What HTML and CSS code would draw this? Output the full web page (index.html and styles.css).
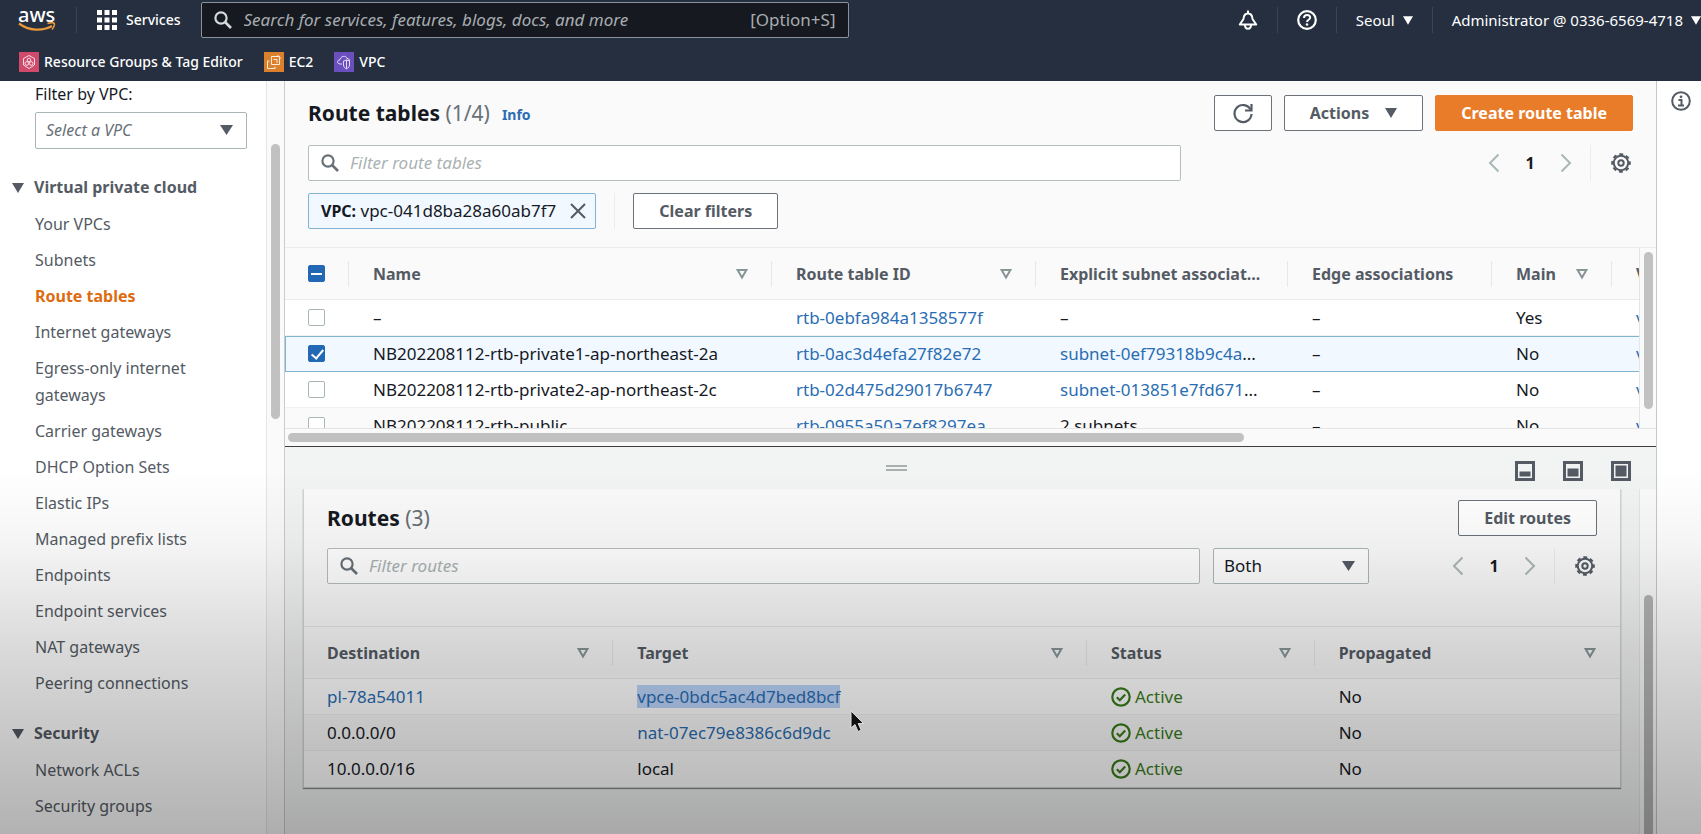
FILE: index.html
```html
<!DOCTYPE html>
<html lang="en">
<head>
    <meta charset="UTF-8">
    <meta name="viewport" content="width=device-width, initial-scale=1.0">
    <title>Route tables | VPC Management Console</title>
    <link rel="stylesheet" href="styles.css">
</head>
<body>
    <!-- shared icons -->
    <svg class="defs" width="0" height="0">
        <symbol id="i-search" viewBox="0 0 18 18"><circle cx="7" cy="7" r="5.6" fill="none" stroke="currentColor" stroke-width="2.2"/><path d="M11 11l6 6" stroke="currentColor" stroke-width="2.6"/></symbol>
        <symbol id="i-gear" viewBox="0 0 20 20"><circle cx="10" cy="10" r="7.2" fill="none" stroke="currentColor" stroke-width="2"/><circle cx="10" cy="10" r="8.8" fill="none" stroke="currentColor" stroke-width="2" stroke-dasharray="3.9 3.01" stroke-dashoffset="1.95"/><circle cx="10" cy="10" r="2.7" fill="none" stroke="currentColor" stroke-width="2"/></symbol>
        <symbol id="i-sort" viewBox="0 0 12 12"><path d="M1.6 2h8.8L6 9.6z" fill="none" stroke="currentColor" stroke-width="2"/></symbol>
        <symbol id="i-caret" viewBox="0 0 12 10"><path d="M0 0h12L6 10z" fill="currentColor"/></symbol>
        <symbol id="i-prev" viewBox="0 0 12 20"><path d="M10.5 1.5L2 10l8.5 8.5" fill="none" stroke="currentColor" stroke-width="2"/></symbol>
        <symbol id="i-next" viewBox="0 0 12 20"><path d="M1.5 1.5L10 10l-8.5 8.5" fill="none" stroke="currentColor" stroke-width="2"/></symbol>
        <symbol id="i-ok" viewBox="0 0 20 20"><circle cx="10" cy="10" r="8.7" fill="none" stroke="currentColor" stroke-width="2.2"/><path d="M5.8 10.2l3 3 5.4-5.6" fill="none" stroke="currentColor" stroke-width="2.2"/></symbol>
    </svg>

    <header class="topbar">
        <div class="topbar-row">
            <a class="logo" href="#" aria-label="aws"><span>aws</span>
                <svg width="38" height="11" viewBox="0 0 38 11"><path d="M1 1.500C11 9 24 9.500 34 4" fill="none" stroke="#e8973a" stroke-width="2.2"/><path d="M29.5 1.6c3-1 6-1 6.7-.2.7 1-.3 4-2.2 6.2" fill="none" stroke="#e8973a" stroke-width="1.6"/></svg>
            </a>
            <span class="bar"></span>
            <button class="services"><svg width="20" height="20" viewBox="0 0 20 20"><path d="M0 0h5v5H0zM7.500 0h5v5h-5zM15 0h5v5h-5zM0 7.500h5v5H0zM7.500 7.500h5v5h-5zM15 7.500h5v5h-5zM0 15h5v5H0zM7.500 15h5v5h-5zM15 15h5v5h-5z" fill="#fff"/></svg>Services</button>
            <label class="global-search">
                <svg width="18" height="18"><use href="#i-search"/></svg>
                <input type="text" aria-label="Search" placeholder="Search for services, features, blogs, docs, and more">
                <span class="shortcut">[Option+S]</span>
            </label>
            <div class="topbar-right">
                <button aria-label="Notifications"><svg width="20" height="20" viewBox="0 0 20 20"><path d="M10 .5v3M1.800 14.500L5.500 9C5.700 5.500 7.500 3.500 10 3.500s4.300 2 4.500 5.500l3.700 5.500z" fill="none" stroke="#fff" stroke-width="2" stroke-linejoin="round"/><path d="M7 15c0 5 6 5 6 0" fill="none" stroke="#fff" stroke-width="2"/></svg></button>
                <span class="bar"></span>
                <button aria-label="Help"><svg width="20" height="20" viewBox="0 0 20 20"><circle cx="10" cy="10" r="8.8" fill="none" stroke="#fff" stroke-width="2.2"/><path d="M7 8c0-4 6.200-3.800 6.200-.5C13.200 9.800 10 9.700 10 12" fill="none" stroke="#fff" stroke-width="2"/><circle cx="10" cy="14.5" r="1.3" fill="#fff"/></svg></button>
                <span class="bar"></span>
                <button>Seoul <svg width="10" height="9"><use href="#i-caret"/></svg></button>
                <span class="bar"></span>
                <button>Administrator @ 0336-6569-4718 <svg width="10" height="9"><use href="#i-caret"/></svg></button>
            </div>
        </div>
        <nav class="favorites">
            <a href="#"><svg class="pink" width="20" height="20" viewBox="0 0 20 20"><path d="M10 3.500l5.500 3v6.500L10 16.500 4.500 13V6.500z" fill="none" stroke="#fff" stroke-opacity=".8"/><circle cx="10" cy="8" r="1.8" fill="none" stroke="#fff" stroke-opacity=".8"/><circle cx="7.8" cy="11.5" r="1.8" fill="none" stroke="#fff" stroke-opacity=".8"/><circle cx="12.2" cy="11.5" r="1.8" fill="none" stroke="#fff" stroke-opacity=".8"/></svg>Resource Groups &amp; Tag Editor</a>
            <a href="#"><svg class="orange" width="20" height="20" viewBox="0 0 20 20"><path d="M7.500 4.500h8v8h-8zM5.500 9h-2v7.500h7.500v-2M14 3v1.500M17 6h-1.500M9.500 7.500h3.500v3.500" fill="none" stroke="#fff" stroke-opacity=".85"/></svg>EC2</a>
            <a href="#"><svg class="purple" width="20" height="20" viewBox="0 0 20 20"><path d="M8 12H6c-3.500-.5-3-4 0-4.200C6.500 4 12 3 13 6.500c1.500 0 2.500.8 2.500 2.500" fill="none" stroke="#fff" stroke-opacity=".8"/><path d="M9.500 9l3-1 3 1v4c0 2-1.500 3-3 3.800-1.500-.8-3-1.800-3-3.800zM12.500 8v8.500" fill="none" stroke="#fff" stroke-opacity=".8"/></svg>VPC</a>
        </nav>
    </header>

    <div class="console">
        <aside class="sidebar">
            <div class="sidebar-body">
                <label class="vpc-label" for="vpc-filter">Filter by VPC:</label>
                <div class="select vpc-select">
                    <select id="vpc-filter" class="placeholder"><option>Select a VPC</option></select>
                </div>
                <h2><svg width="12" height="10"><use href="#i-caret"/></svg>Virtual private cloud</h2>
                <ul>
                    <li><a href="#">Your VPCs</a></li>
                    <li><a href="#">Subnets</a></li>
                    <li><a class="active" href="#">Route tables</a></li>
                    <li><a href="#">Internet gateways</a></li>
                    <li><a href="#">Egress-only internet gateways</a></li>
                    <li><a href="#">Carrier gateways</a></li>
                    <li><a href="#">DHCP Option Sets</a></li>
                    <li><a href="#">Elastic IPs</a></li>
                    <li><a href="#">Managed prefix lists</a></li>
                    <li><a href="#">Endpoints</a></li>
                    <li><a href="#">Endpoint services</a></li>
                    <li><a href="#">NAT gateways</a></li>
                    <li><a href="#">Peering connections</a></li>
                </ul>
                <h2><svg width="12" height="10"><use href="#i-caret"/></svg>Security</h2>
                <ul>
                    <li><a href="#">Network ACLs</a></li>
                    <li><a href="#">Security groups</a></li>
                </ul>
            </div>
            <div class="vscroll side-scroll"><div class="thumb"></div></div>
        </aside>

        <main class="content">
            <section class="list-pane">
                <div class="list-head">
                    <div class="title-row">
                        <h1>Route tables <span class="count">(1/4)</span></h1>
                        <a class="info" href="#">Info</a>
                        <div class="actions">
                            <button class="btn icon-btn" aria-label="Refresh"><svg width="22" height="22" viewBox="0 0 22 22"><path d="M18.500 7.500A8.500 8.500 0 1 0 19.500 12" fill="none" stroke="currentColor" stroke-width="2.2"/><path d="M19.500 2v6.500H13" fill="none" stroke="currentColor" stroke-width="2.2"/></svg></button>
                            <button class="btn">Actions <svg width="12" height="10"><use href="#i-caret"/></svg></button>
                            <button class="btn primary">Create route table</button>
                        </div>
                    </div>
                    <div class="filter-row">
                        <label class="search-box">
                            <svg width="18" height="18"><use href="#i-search"/></svg>
                            <input type="text" aria-label="Filter route tables" placeholder="Filter route tables">
                        </label>
                        <div class="pager">
                            <button aria-label="Previous page"><svg width="12" height="20"><use href="#i-prev"/></svg></button>
                            <b>1</b>
                            <button aria-label="Next page"><svg width="12" height="20"><use href="#i-next"/></svg></button>
                            <span class="rule"></span>
                            <button class="gear" aria-label="Preferences"><svg width="20" height="20"><use href="#i-gear"/></svg></button>
                        </div>
                    </div>
                    <div class="chip-row">
                        <div class="chip"><span><b>VPC:</b> vpc-041d8ba28a60ab7f7</span><button aria-label="Remove filter"><svg width="16" height="16" viewBox="0 0 16 16"><path d="M1 1l14 14M15 1L1 15" stroke="currentColor" stroke-width="2"/></svg></button></div>
                        <span class="rule"></span>
                        <button class="btn">Clear filters</button>
                    </div>
                </div>
                <div class="list-body">
                    <div class="table-clip">
                        <table class="route-tables">
                            <colgroup><col class="c-check"><col class="c-name"><col class="c-id"><col class="c-subnet"><col class="c-edge"><col class="c-main"><col class="c-vpc"></colgroup>
                            <thead>
                                <tr>
                                    <th><input class="partial" type="checkbox" aria-label="Select all"></th>
                                    <th><div>Name <svg width="12" height="12"><use href="#i-sort"/></svg></div></th>
                                    <th><div>Route table ID <svg width="12" height="12"><use href="#i-sort"/></svg></div></th>
                                    <th><div>Explicit subnet associat...</div></th>
                                    <th><div>Edge associations</div></th>
                                    <th><div>Main <svg width="12" height="12"><use href="#i-sort"/></svg></div></th>
                                    <th><div>VPC</div></th>
                                </tr>
                            </thead>
                            <tbody>
                                <tr>
                                    <td><input type="checkbox" aria-label="Select rtb-0ebfa984a1358577f"></td>
                                    <td>–</td>
                                    <td><a href="#">rtb-0ebfa984a1358577f</a></td>
                                    <td>–</td>
                                    <td>–</td>
                                    <td>Yes</td>
                                    <td><a href="#">vpc-041d8ba28a60ab7f7</a></td>
                                </tr>
                                <tr class="selected">
                                    <td><input type="checkbox" checked aria-label="Select rtb-0ac3d4efa27f82e72"></td>
                                    <td>NB202208112-rtb-private1-ap-northeast-2a</td>
                                    <td><a href="#">rtb-0ac3d4efa27f82e72</a></td>
                                    <td><a href="#">subnet-0ef79318b9c4a</a>...</td>
                                    <td>–</td>
                                    <td>No</td>
                                    <td><a href="#">vpc-041d8ba28a60ab7f7</a></td>
                                </tr>
                                <tr>
                                    <td><input type="checkbox" aria-label="Select rtb-02d475d29017b6747"></td>
                                    <td>NB202208112-rtb-private2-ap-northeast-2c</td>
                                    <td><a href="#">rtb-02d475d29017b6747</a></td>
                                    <td><a href="#">subnet-013851e7fd671</a>...</td>
                                    <td>–</td>
                                    <td>No</td>
                                    <td><a href="#">vpc-041d8ba28a60ab7f7</a></td>
                                </tr>
                                <tr class="shade">
                                    <td><input type="checkbox" aria-label="Select rtb-0955a50a7ef8297ea"></td>
                                    <td>NB202208112-rtb-public</td>
                                    <td><a href="#">rtb-0955a50a7ef8297ea</a></td>
                                    <td>2 subnets</td>
                                    <td>–</td>
                                    <td>No</td>
                                    <td><a href="#">vpc-041d8ba28a60ab7f7</a></td>
                                </tr>
                            </tbody>
                        </table>
                    </div>
                    <div class="vscroll list-scroll"><div class="thumb"></div></div>
                </div>
                <div class="hscroll"><div class="thumb"></div></div>
            </section>

            <section class="split-panel">
                <div class="split-head">
                    <span class="grip"></span>
                    <div class="split-sizes">
                        <button aria-label="Small panel"><svg width="20" height="20" viewBox="0 0 20 20"><path d="M1.500 1.500h17v17h-17z" fill="#f2f3f3" stroke="currentColor" stroke-width="3"/><path d="M4.500 10.500h11v5h-11z" fill="currentColor"/></svg></button>
                        <button aria-label="Medium panel"><svg width="20" height="20" viewBox="0 0 20 20"><path d="M1.500 1.500h17v17h-17z" fill="#f2f3f3" stroke="currentColor" stroke-width="3"/><path d="M4.500 7.500h11v8h-11z" fill="currentColor"/></svg></button>
                        <button aria-label="Large panel"><svg width="20" height="20" viewBox="0 0 20 20"><path d="M1.500 1.500h17v17h-17z" fill="#f2f3f3" stroke="currentColor" stroke-width="3"/><path d="M4.500 4.500h11v11h-11z" fill="currentColor"/></svg></button>
                    </div>
                </div>
                <div class="split-body">
                    <div class="card-wrap">
                        <div class="card">
                            <div class="title-row">
                                <h1>Routes <span class="count">(3)</span></h1>
                                <div class="actions"><button class="btn">Edit routes</button></div>
                            </div>
                            <div class="filter-row">
                                <label class="search-box">
                                    <svg width="18" height="18"><use href="#i-search"/></svg>
                                    <input type="text" aria-label="Filter routes" placeholder="Filter routes">
                                </label>
                                <div class="select both-select">
                                    <select aria-label="Route type"><option>Both</option></select>
                                </div>
                                <div class="pager">
                                    <button aria-label="Previous page"><svg width="12" height="20"><use href="#i-prev"/></svg></button>
                                    <b>1</b>
                                    <button aria-label="Next page"><svg width="12" height="20"><use href="#i-next"/></svg></button>
                                    <span class="rule"></span>
                                    <button class="gear" aria-label="Preferences"><svg width="20" height="20"><use href="#i-gear"/></svg></button>
                                </div>
                            </div>
                            <table class="routes">
                                <colgroup><col class="r-dest"><col class="r-target"><col class="r-status"><col></colgroup>
                                <thead>
                                    <tr>
                                        <th><div>Destination <svg width="12" height="12"><use href="#i-sort"/></svg></div></th>
                                        <th><div>Target <svg width="12" height="12"><use href="#i-sort"/></svg></div></th>
                                        <th><div>Status <svg width="12" height="12"><use href="#i-sort"/></svg></div></th>
                                        <th><div>Propagated <svg width="12" height="12"><use href="#i-sort"/></svg></div></th>
                                    </tr>
                                </thead>
                                <tbody>
                                    <tr>
                                        <td><a href="#">pl-78a54011</a></td>
                                        <td><a class="marked" href="#">vpce-0bdc5ac4d7bed8bcf</a></td>
                                        <td><span class="ok"><svg width="20" height="20"><use href="#i-ok"/></svg>Active</span></td>
                                        <td>No</td>
                                    </tr>
                                    <tr class="shade">
                                        <td>0.0.0.0/0</td>
                                        <td><a href="#">nat-07ec79e8386c6d9dc</a></td>
                                        <td><span class="ok"><svg width="20" height="20"><use href="#i-ok"/></svg>Active</span></td>
                                        <td>No</td>
                                    </tr>
                                    <tr>
                                        <td>10.0.0.0/16</td>
                                        <td>local</td>
                                        <td><span class="ok"><svg width="20" height="20"><use href="#i-ok"/></svg>Active</span></td>
                                        <td>No</td>
                                    </tr>
                                </tbody>
                            </table>
                        </div>
                    </div>
                    <div class="vscroll split-scroll"><div class="thumb"></div></div>
                </div>
            </section>
        </main>

        <aside class="tools">
            <button aria-label="Open help panel"><svg width="20" height="20" viewBox="0 0 20 20"><circle cx="10" cy="10" r="8.8" fill="none" stroke="currentColor" stroke-width="2"/><circle cx="10" cy="5.8" r="1.4" fill="currentColor"/><path d="M7.500 9h3v5.500M7 14.500h6" fill="none" stroke="currentColor" stroke-width="2"/></svg></button>
        </aside>
    </div>

    <div class="shadow-fade"></div>
    <svg class="pointer" width="15" height="23" viewBox="0 0 15 23"><path d="M1 1v17l4-3.500L8 21.500l3.200-1.300-3-6.700h5.300z" fill="#111" stroke="#ddd" stroke-width="1"/></svg>
</body>
</html>
```
FILE: styles.css
```css
* {
    box-sizing: border-box;
}
body {
    margin: 0;
    height: 100vh;
    display: flex;
    flex-direction: column;
    overflow: hidden;
    font-family: "Noto Sans", "Open Sans", sans-serif;
    font-size: 16px;
    line-height: 24px;
    color: #16191f;
    background: #fff;
}
button, input, select {
    font: inherit;
    color: inherit;
}
button {
    background: none;
    border: none;
    padding: 0;
    cursor: pointer;
}
a {
    color: #2a6db3;
    text-decoration: none;
}
h1, h2, ul {
    margin: 0;
    padding: 0;
}
svg {
    flex: none;
    display: block;
}
.defs {
    position: absolute;
}

/* top bar */
.topbar {
    flex: none;
    background: #252f3f;
    color: #fff;
    font-size: 14px;
}
.topbar-row {
    height: 40px;
    display: flex;
    align-items: center;
}
.logo {
    width: 38px;
    margin-left: 18px;
    color: #fff;
}
.logo span {
    display: block;
    font-size: 20px;
    font-weight: 500;
    line-height: 14px;
}
.bar {
    width: 1px;
    height: 26px;
    background: #3b4554;
}
.logo + .bar {
    margin: 0 20px;
}
.services {
    display: flex;
    align-items: center;
    gap: 9px;
    margin-right: 20px;
    font-weight: 500;
}
.global-search {
    width: 648px;
    height: 36px;
    padding: 0 12px;
    display: flex;
    align-items: center;
    gap: 12px;
    font-size: 17px;
    background: #16191f;
    border: 1px solid #8a939c;
    border-radius: 2px;
    color: #d5dbdb;
}
.global-search input {
    flex: 1;
    min-width: 0;
    background: none;
    border: none;
    padding: 0;
    outline: none;
}
.global-search input::placeholder {
    color: #a7adb1;
    font-style: italic;
    opacity: 1;
}
.shortcut {
    color: #a7adb1;
}
.topbar-right {
    margin-left: auto;
    display: flex;
    align-items: center;
    gap: 19px;
    font-size: 15px;
}
.topbar-right button {
    display: flex;
    align-items: center;
    gap: 8px;
    white-space: nowrap;
}
.favorites {
    height: 41px;
    padding: 3px 19px 0;
    display: flex;
    align-items: center;
    gap: 21px;
}
.favorites a {
    display: flex;
    align-items: center;
    gap: 5px;
    color: #fff;
    font-weight: 500;
}
.pink {
    background: #cf4a6b;
}
.orange {
    background: #dd802c;
}
.purple {
    background: #6b4fbf;
}

/* layout */
.console {
    flex: 1;
    min-height: 0;
    display: flex;
}
.sidebar {
    width: 284px;
    flex: none;
    display: flex;
    overflow: hidden;
}
.sidebar-body {
    flex: 1;
    padding: 0 19px 0 35px;
    line-height: 27px;
    color: #545b64;
}
.vpc-label {
    display: block;
    color: #16191f;
}
.vpc-select {
    margin-top: 4px;
}
.sidebar h2 {
    display: flex;
    align-items: center;
    gap: 10px;
    margin: 25px 0 10px -23px;
    font-size: 16px;
    line-height: 27px;
}
.sidebar ul {
    list-style: none;
}
.sidebar li {
    margin-bottom: 9px;
}
.sidebar li a {
    display: block;
    color: #545b64;
}
.sidebar li a.active {
    color: #dd6b10;
    font-weight: bold;
}
.sidebar ul + h2 {
    margin-top: 23px;
}
.content {
    flex: 1;
    min-width: 0;
    display: flex;
    flex-direction: column;
    border-left: 1px solid #c8cccc;
}
.tools {
    width: 45px;
    flex: none;
    padding: 10px 0 0 14px;
    border-left: 1px solid #c4c8c8;
    color: #545b64;
}

/* scroll bars */
.vscroll {
    width: 18px;
    flex: none;
    padding: 0 4px;
    background: #fafafa;
    border-left: 1px solid #e4e6e6;
}
.list-scroll, .split-scroll {
    width: 17px;
}
.hscroll {
    height: 18px;
    flex: none;
    padding: 4px 3px;
    background: #fafafa;
    border-top: 1px solid #e4e6e6;
}
.thumb {
    background: #c1c1c1;
    border-radius: 5px;
}
.vscroll .thumb {
    width: 9px;
}
.side-scroll .thumb {
    height: 275px;
    margin-top: 63px;
}
.list-scroll .thumb {
    height: 157px;
    margin-top: 4px;
}
.split-scroll .thumb {
    height: 300px;
    margin-top: 106px;
    background: #b4b4b4;
}
.hscroll .thumb {
    width: 70%;
    height: 9px;
}

/* form parts */
.btn {
    height: 36px;
    padding: 0 25px;
    display: flex;
    align-items: center;
    gap: 16px;
    background: #fff;
    border: 1px solid #6b7279;
    border-radius: 2px;
    color: #545b64;
    font-weight: bold;
    white-space: nowrap;
}
.btn.primary {
    background: #e97c28;
    border-color: #e97c28;
    color: #fff;
}
.icon-btn {
    padding: 0 17px;
}
.search-box {
    height: 36px;
    padding: 0 12px;
    flex: 0 1 873px;
    display: flex;
    align-items: center;
    gap: 11px;
    font-size: 17px;
    background: #fff;
    border: 1px solid #b6bdbd;
    border-radius: 2px;
    color: #687078;
}
.search-box input {
    flex: 1;
    min-width: 0;
    border: none;
    padding: 0;
    background: none;
    outline: none;
}
.search-box input::placeholder {
    color: #aab2b3;
    font-style: italic;
    opacity: 1;
}
.select {
    position: relative;
    height: 37px;
}
.select::after {
    content: "";
    position: absolute;
    right: 14px;
    top: 13px;
    width: 13px;
    height: 10px;
    background: #545b64;
    clip-path: polygon(0 0, 100% 0, 50% 100%);
    pointer-events: none;
}
.select select {
    appearance: none;
    width: 100%;
    height: 100%;
    padding: 0 10px;
    background: #fff;
    border: 1px solid #aab7b8;
    border-radius: 2px;
}
.select .placeholder {
    font-style: italic;
    color: #687078;
}
.both-select {
    width: 156px;
    height: 36px;
    margin-left: 13px;
    font-size: 17px;
}
.pager {
    margin-left: auto;
    display: flex;
    align-items: center;
    color: #aab7b8;
}
.pager b {
    width: 60px;
    text-align: center;
    color: #16191f;
}
.rule {
    width: 1px;
    height: 36px;
    background: #eaeded;
}
.pager .rule {
    margin: 0 20px 0 18px;
}
.gear {
    color: #545b64;
    margin-right: 2px;
}

/* route tables list */
.list-pane {
    flex: 1;
    min-height: 0;
    display: flex;
    flex-direction: column;
}
.list-head {
    flex: none;
    padding: 14px 23px 18px;
    background: #fafafa;
    border-bottom: 1px solid #eaeded;
}
.title-row {
    display: flex;
    align-items: center;
    height: 36px;
}
.title-row h1 {
    font-size: 21px;
    line-height: 28px;
}
.count {
    color: #687078;
    font-weight: normal;
}
.info {
    margin: 4px 0 0 12px;
    font-size: 14px;
    font-weight: bold;
}
.actions {
    margin-left: auto;
    display: flex;
    gap: 12px;
}
.filter-row {
    margin-top: 14px;
    display: flex;
    align-items: center;
}
.chip-row {
    margin-top: 12px;
    display: flex;
    align-items: center;
    gap: 18px;
}
.chip {
    height: 36px;
    padding: 0 9px 0 12px;
    display: flex;
    align-items: center;
    gap: 14px;
    font-size: 17px;
    background: #f1f8ff;
    border: 1px solid #7fb5d3;
    border-radius: 2px;
}
.chip b {
    font-size: 16px;
}
.chip button {
    color: #545b64;
}
.list-body {
    flex: 1;
    min-height: 0;
    display: flex;
}
.table-clip {
    flex: 1;
    min-width: 0;
    overflow: hidden;
}
table {
    table-layout: fixed;
    border-collapse: separate;
    border-spacing: 0;
    width: 100%;
}
.route-tables {
    width: 1507px;
}
.c-check {
    width: 64px;
}
.c-name {
    width: 423px;
}
.c-id {
    width: 264px;
}
.c-subnet {
    width: 252px;
}
.c-edge {
    width: 204px;
}
.c-main {
    width: 120px;
}
th {
    height: 52px;
    padding: 0 24px;
    text-align: left;
    color: #545b64;
    background: linear-gradient(#e6e9e9, #e6e9e9) right center / 1px 26px no-repeat #fafafa;
    border-bottom: 1px solid #eaeded;
    white-space: nowrap;
}
th:last-child {
    background: #fafafa;
}
th div {
    display: flex;
    align-items: center;
    justify-content: space-between;
}
th svg {
    color: #879596;
}
td {
    height: 36px;
    padding: 0 24px;
    font-size: 17px;
    border-bottom: 1px solid #f0f2f2;
    white-space: nowrap;
}
th:first-child, td:first-child {
    padding-left: 23px;
}
.shade td {
    background: #fafafa;
}
.selected td {
    background: #f1f8ff;
    border-bottom: 1px solid #7fb5d3;
    box-shadow: inset 0 1px #7fb5d3;
}
.selected td:first-child {
    box-shadow: inset 1px 1px #7fb5d3;
}
input[type="checkbox"] {
    appearance: none;
    position: relative;
    display: block;
    width: 17px;
    height: 17px;
    margin: 0;
    background: #fff;
    border: 1px solid #aab7b8;
    border-radius: 2px;
}
input[type="checkbox"]:checked, input.partial {
    background: #2268b4;
    border-color: #2268b4;
}
input[type="checkbox"]:checked::after {
    content: "";
    position: absolute;
    left: 5px;
    top: 1px;
    width: 5px;
    height: 10px;
    border: solid #fff;
    border-width: 0 2px 2px 0;
    transform: rotate(40deg);
}
input.partial::after {
    content: "";
    position: absolute;
    left: 2px;
    top: 7px;
    width: 11px;
    height: 2px;
    background: #fff;
}

/* split panel */
.split-panel {
    flex: none;
    height: 388px;
    display: flex;
    flex-direction: column;
    border-top: 1px solid #3c4045;
    background: #f2f3f3;
}
.split-head {
    height: 42px;
    flex: none;
    padding-right: 25px;
    display: flex;
    align-items: center;
    justify-content: space-between;
}
.grip {
    width: 21px;
    height: 6px;
    margin: 0 auto;
    border: solid #aab0b0;
    border-width: 2px 0;
}
.split-sizes {
    display: flex;
    gap: 28px;
    padding: 6px 0 0 8px;
    color: #545b64;
}
.split-body {
    flex: 1;
    min-height: 0;
    display: flex;
    overflow: hidden;
}
.card-wrap {
    flex: 1;
    min-width: 0;
    padding: 0 18px;
}
.card {
    padding-top: 11px;
    background: #fafafa;
    border: 1px solid #d0d4d4;
    border-top: none;
    box-shadow: 0 1px 1px #8a8d8d;
}
.card .title-row, .card .filter-row {
    padding: 0 23px;
}
.card .filter-row {
    margin-top: 12px;
}
.routes {
    margin-top: 42px;
    border-top: 1px solid #e3e6e6;
}
.routes tbody {
    background: #fff;
}
.r-dest {
    width: 23.5%;
}
.r-target {
    width: 36%;
}
.r-status {
    width: 17.3%;
}
.routes tr:last-child td {
    border-bottom: none;
}
.marked {
    background: #bcd6fc;
}
.ok {
    display: flex;
    align-items: center;
    gap: 4px;
    color: #3a7d1c;
}

/* darkening towards the bottom edge */
.shadow-fade {
    position: fixed;
    left: 0;
    right: 0;
    bottom: 0;
    height: 364px;
    background: linear-gradient(rgba(0, 0, 0, 0), rgba(0, 0, 0, .04) 20%, rgba(0, 0, 0, .15) 50%, rgba(0, 0, 0, .3));
    pointer-events: none;
}
.pointer {
    position: absolute;
    left: 850px;
    top: 710px;
}
```
